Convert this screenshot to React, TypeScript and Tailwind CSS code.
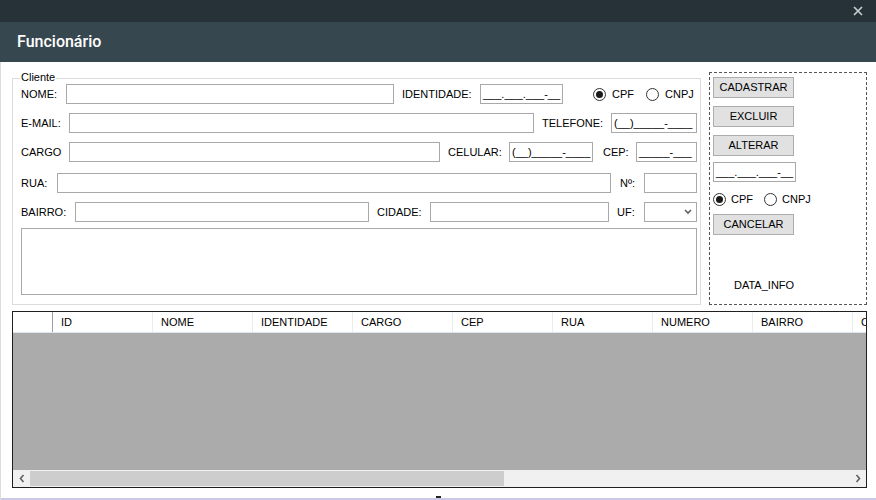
import React from "react";

function Input({ w, text, h = "h-[20px]" }: { w: string; text?: string; h?: string }) {
  return (
    <div className={`${w} ${h} shrink-0 border border-[#a9a9a9] bg-white flex items-center pl-[2px] text-[11px] leading-none overflow-hidden whitespace-nowrap`}>
      {text}
    </div>
  );
}

function Label({ w, ml, children }: { w: string; ml?: string; children: React.ReactNode }) {
  return <span className={`${w} ${ml ?? ""} shrink-0 text-[11px] leading-none whitespace-nowrap`}>{children}</span>;
}

function Radio({ checked }: { checked?: boolean }) {
  return (
    <span className="w-[13px] h-[13px] shrink-0 rounded-full border border-[#333] bg-white flex items-center justify-center">
      {checked && <span className="w-[7px] h-[7px] rounded-full bg-[#1a1a1a]" />}
    </span>
  );
}

function Button({ children, mt, ml }: { children: React.ReactNode; mt?: string; ml?: string }) {
  return (
    <div className={`w-[81px] h-[21px] ${mt ?? ""} ${ml ?? ""} border border-[#adadad] bg-[#e1e1e1] flex items-center justify-center text-[11px] leading-none`}>
      {children}
    </div>
  );
}

const cols = ["ID", "NOME", "IDENTIDADE", "CARGO", "CEP", "RUA", "NUMERO", "BAIRRO", "CIDADE"];

export default function App() {
  return (
    <div className="w-[876px] h-[500px] overflow-hidden bg-white text-black font-['Liberation_Sans',Arial,sans-serif] flex flex-col">
      {/* window title bar */}
      <div className="h-[22px] bg-[#263238] flex items-center justify-end pr-[13px]">
        <svg width="10" height="10" viewBox="0 0 10 10">
          <path d="M1 1 L9 9 M9 1 L1 9" stroke="#c5ced3" strokeWidth="1.7" />
        </svg>
      </div>
      {/* header */}
      <div className="h-[40px] bg-[#37474f] flex items-center pl-[17px]">
        <span className="text-white text-[16px] font-medium font-['Roboto',sans-serif]">Funcionário</span>
      </div>
      {/* body */}
      <div className="flex-1 flex flex-col border-l border-[#dcdcdc]">
        <div className="flex items-start pt-[10px] pl-[11px]">
          {/* group box */}
          <div className="relative mt-[6px] w-[689px] h-[227px] border border-[#dcdcdc] pl-[8px] pt-[5px] flex flex-col">
            <span className="absolute left-[7px] top-[-7px] bg-white px-[1px] text-[11px] leading-none">Cliente</span>
            {/* row 1 */}
            <div className="flex items-center h-[20px]">
              <Label w="w-[45px]">NOME:</Label>
              <Input w="w-[328px]" />
              <Label w="w-[78px]" ml="ml-[8px]">IDENTIDADE:</Label>
              <Input w="w-[83px]" text="___.___.___-__" />
              <span className="ml-[30px] flex items-center">
                <Radio checked />
                <span className="ml-[6px] text-[11px] leading-none">CPF</span>
              </span>
              <span className="ml-[12px] flex items-center">
                <Radio />
                <span className="ml-[6px] text-[11px] leading-none">CNPJ</span>
              </span>
            </div>
            {/* row 2 */}
            <div className="flex items-center h-[20px] mt-[9px]">
              <Label w="w-[48px]">E-MAIL:</Label>
              <Input w="w-[465px]" />
              <Label w="w-[69px]" ml="ml-[8px]">TELEFONE:</Label>
              <Input w="w-[86px]" text="(__)_____-____" />
            </div>
            {/* row 3 */}
            <div className="flex items-center h-[20px] mt-[9px]">
              <Label w="w-[48px]">CARGO</Label>
              <Input w="w-[371px]" />
              <Label w="w-[61px]" ml="ml-[8px]">CELULAR:</Label>
              <Input w="w-[84px]" text="(__)_____-____" />
              <Label w="w-[33px]" ml="ml-[10px]">CEP:</Label>
              <Input w="w-[61px]" text="_____-___" />
            </div>
            {/* row 4 */}
            <div className="flex items-center h-[20px] mt-[11px]">
              <Label w="w-[36px]">RUA:</Label>
              <Input w="w-[554px]" />
              <Label w="w-[24px]" ml="ml-[9px]">Nº:</Label>
              <Input w="w-[53px]" />
            </div>
            {/* row 5 */}
            <div className="flex items-center h-[20px] mt-[9px]">
              <Label w="w-[54px]">BAIRRO:</Label>
              <Input w="w-[294px]" />
              <Label w="w-[53px]" ml="ml-[8px]">CIDADE:</Label>
              <Input w="w-[179px]" />
              <Label w="w-[27px]" ml="ml-[8px]">UF:</Label>
              <div className="w-[53px] h-[20px] border border-[#a9a9a9] bg-white flex items-center justify-end pr-[4px]">
                <svg width="8" height="6" viewBox="0 0 8 6">
                  <path d="M1 1 L4 4 L7 1" stroke="#606060" strokeWidth="1.6" fill="none" />
                </svg>
              </div>
            </div>
            {/* textarea */}
            <div className="mt-[6px] w-[676px] h-[67px] border border-[#a9a9a9] bg-white" />
          </div>
          {/* right panel */}
          <div className="ml-[8px] w-[158px] h-[233px] border border-dashed border-[#555] pl-[3px] pt-[4px] flex flex-col">
            <Button>CADASTRAR</Button>
            <Button mt="mt-[8px]">EXCLUIR</Button>
            <Button mt="mt-[8px]">ALTERAR</Button>
            <div className="mt-[6px]">
              <Input w="w-[83px]" text="___.___.___-__" />
            </div>
            <div className="mt-[9px] h-[16px] flex items-center">
              <Radio checked />
              <span className="ml-[5px] text-[11px] leading-none">CPF</span>
              <span className="ml-[11px]"><Radio /></span>
              <span className="ml-[5px] text-[11px] leading-none">CNPJ</span>
            </div>
            <Button mt="mt-[7px]">CANCELAR</Button>
            <span className="mt-[45px] ml-[21px] text-[11px] leading-none">DATA_INFO</span>
          </div>
        </div>
        {/* data grid */}
        <div className="mt-[6px] ml-[11px] w-[855px] h-[177px] border border-[#1f1f1f] flex flex-col overflow-hidden">
          <div className="h-[21px] shrink-0 bg-white border-b border-[#dde6ee] flex">
            <div className="w-[40px] shrink-0 border-r border-[#a0a0a0]" />
            {cols.map((c) => (
              <div key={c} className="w-[100px] shrink-0 border-r border-[#ececec] flex items-center pl-[8px] text-[11px] leading-none whitespace-nowrap overflow-hidden">
                {c}
              </div>
            ))}
          </div>
          <div className="flex-1 bg-[#ababab]" />
          <div className="h-[17px] shrink-0 bg-[#f0f0f0] flex items-center">
            <div className="w-[17px] h-[17px] flex items-center justify-center">
              <svg width="6" height="9" viewBox="0 0 6 9">
                <path d="M4.5 1 L1.5 4.5 L4.5 8" stroke="#606060" strokeWidth="1.6" fill="none" />
              </svg>
            </div>
            <div className="w-[474px] h-[15px] bg-[#cdcdcd]" />
            <div className="flex-1" />
            <div className="w-[17px] h-[17px] flex items-center justify-center">
              <svg width="6" height="9" viewBox="0 0 6 9">
                <path d="M1.5 1 L4.5 4.5 L1.5 8" stroke="#606060" strokeWidth="1.6" fill="none" />
              </svg>
            </div>
          </div>
        </div>
        <div className="flex-1 flex flex-col justify-end">
          <div className="ml-[435px] w-[5px] h-[2px] bg-[#222]" />
          <div className="h-[2px] bg-[#cacae6]" />
        </div>
      </div>
    </div>
  );
}
